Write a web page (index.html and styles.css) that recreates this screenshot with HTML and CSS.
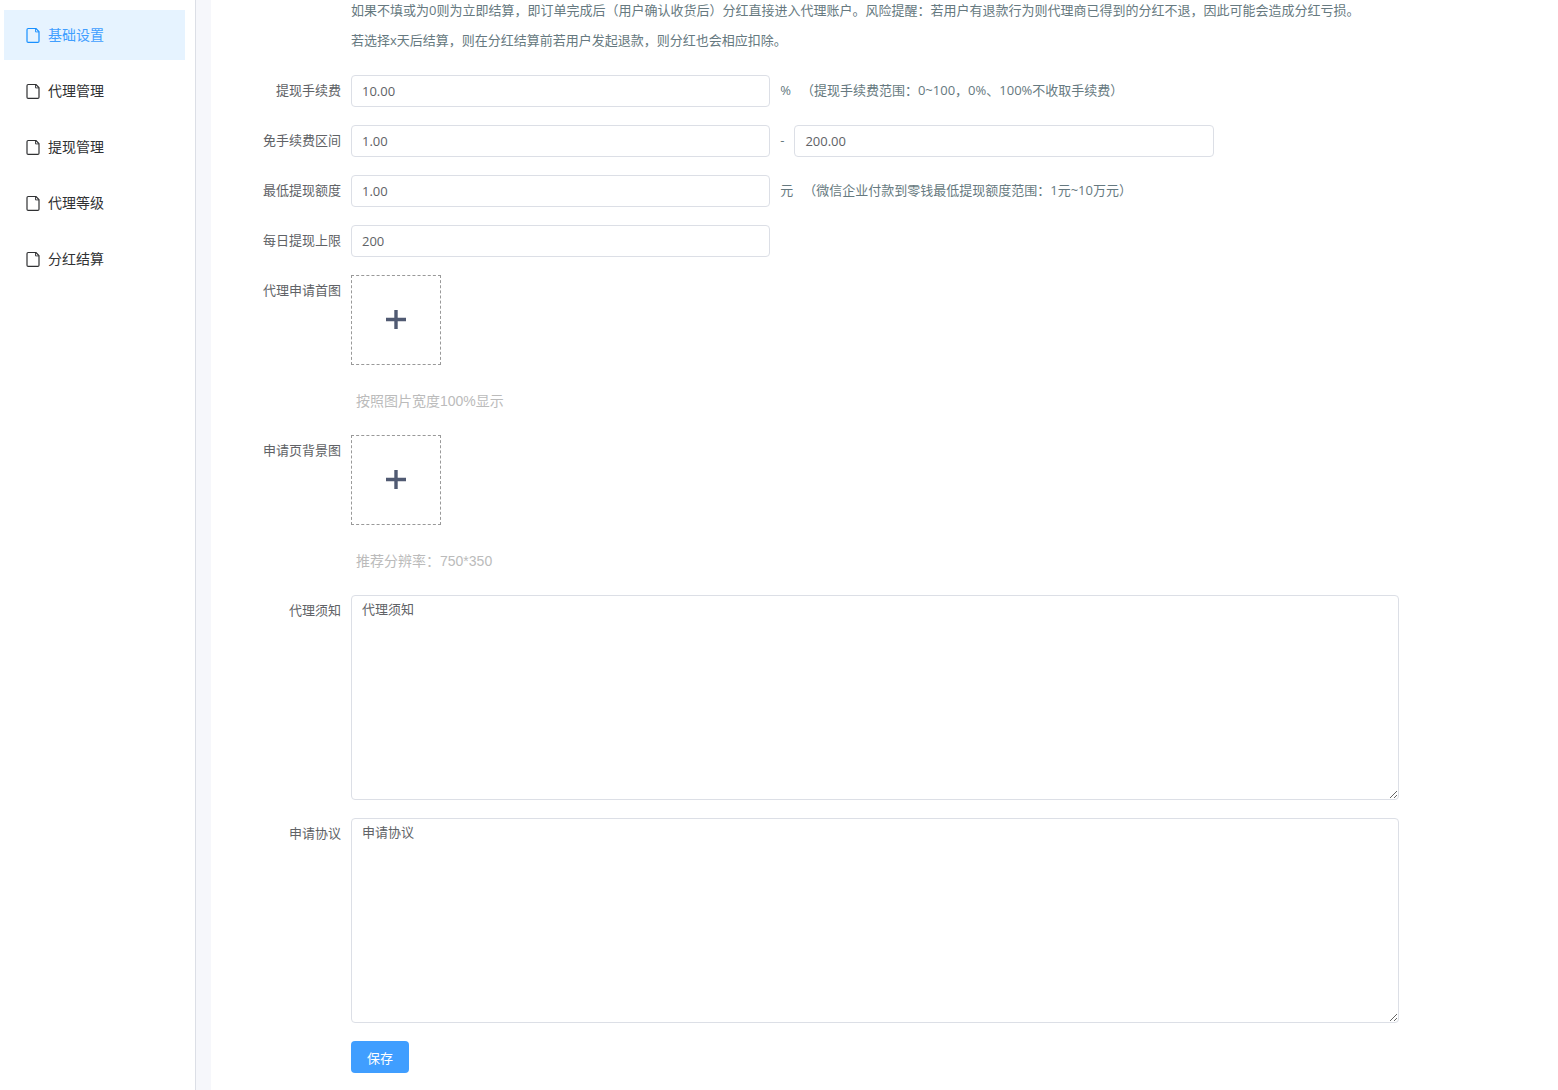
FILE: index.html
```html
<!DOCTYPE html>
<html lang="zh-CN">
<head>
  <meta charset="utf-8">
  <meta name="viewport" content="width=device-width, initial-scale=1">
  <title>基础设置</title>
  <link rel="stylesheet" href="styles.css">
</head>
<body>
  <svg class="sprite" aria-hidden="true">
    <symbol id="icon-file" viewBox="0 0 14 16">
      <path d="M2.2 1.5H9.9L13 4.6V14.2Q13 15.4 11.8 15.4H2.2Q1 15.4 1 14.2V2.7Q1 1.5 2.2 1.5Z" fill="none" stroke="currentColor" stroke-width="1.2" stroke-linejoin="round"/>
      <path d="M9.5 1.5V4.9H13" fill="none" stroke="currentColor" stroke-width="0.9"/>
    </symbol>
    <symbol id="icon-plus" viewBox="0 0 20 20">
      <path d="M0 9.5H20M10 0V19" fill="none" stroke="currentColor" stroke-width="3.4"/>
    </symbol>
  </svg>

  <div class="layout">
    <nav class="sidebar">
      <a href="#" class="menu-item active"><svg class="menu-icon"><use href="#icon-file"/></svg><span>基础设置</span></a>
      <a href="#" class="menu-item"><svg class="menu-icon"><use href="#icon-file"/></svg><span>代理管理</span></a>
      <a href="#" class="menu-item"><svg class="menu-icon"><use href="#icon-file"/></svg><span>提现管理</span></a>
      <a href="#" class="menu-item"><svg class="menu-icon"><use href="#icon-file"/></svg><span>代理等级</span></a>
      <a href="#" class="menu-item"><svg class="menu-icon"><use href="#icon-file"/></svg><span>分红结算</span></a>
    </nav>

    <main class="content">
      <form class="form">
        <div class="notes">
          <p>如果不填或为0则为立即结算，即订单完成后（用户确认收货后）分红直接进入代理账户。风险提醒：若用户有退款行为则代理商已得到的分红不退，因此可能会造成分红亏损。</p>
          <p>若选择x天后结算，则在分红结算前若用户发起退款，则分红也会相应扣除。</p>
        </div>

        <div class="form-item">
          <label class="label" for="fee">提现手续费</label>
          <div class="field">
            <input class="input" id="fee" type="text" value="10.00">
            <span class="unit">%</span>
            <span class="tip">（提现手续费范围：0~100，0%、100%不收取手续费）</span>
          </div>
        </div>

        <div class="form-item">
          <label class="label" for="free-min">免手续费区间</label>
          <div class="field">
            <input class="input" id="free-min" type="text" value="1.00">
            <span class="unit">-</span>
            <input class="input" id="free-max" type="text" value="200.00" aria-label="免手续费区间上限">
          </div>
        </div>

        <div class="form-item">
          <label class="label" for="min">最低提现额度</label>
          <div class="field">
            <input class="input" id="min" type="text" value="1.00">
            <span class="unit">元</span>
            <span class="tip">（微信企业付款到零钱最低提现额度范围：1元~10万元）</span>
          </div>
        </div>

        <div class="form-item">
          <label class="label" for="daily">每日提现上限</label>
          <div class="field">
            <input class="input" id="daily" type="text" value="200">
          </div>
        </div>

        <div class="form-item">
          <label class="label" for="banner">代理申请首图</label>
          <div class="field column">
            <button class="upload" id="banner" type="button" aria-label="上传"><svg class="plus"><use href="#icon-plus"/></svg></button>
            <p class="upload-tip">按照图片宽度100%显示</p>
          </div>
        </div>

        <div class="form-item">
          <label class="label" for="background">申请页背景图</label>
          <div class="field column">
            <button class="upload" id="background" type="button" aria-label="上传"><svg class="plus"><use href="#icon-plus"/></svg></button>
            <p class="upload-tip">推荐分辨率：750*350</p>
          </div>
        </div>

        <div class="form-item">
          <label class="label" for="notice">代理须知</label>
          <div class="field">
            <textarea class="textarea" id="notice">代理须知</textarea>
          </div>
        </div>

        <div class="form-item">
          <label class="label" for="agreement">申请协议</label>
          <div class="field">
            <textarea class="textarea" id="agreement">申请协议</textarea>
          </div>
        </div>

        <button class="save" type="submit">保存</button>
      </form>
    </main>
  </div>
</body>
</html>
```

FILE: styles.css
```css
* {
  box-sizing: border-box;
}

body {
  margin: 0;
  background: #fff;
  color: #606266;
  font-family: "Open Sans", "Noto Sans CJK SC", sans-serif;
  font-size: 13px;
}

p {
  margin: 0;
}

input, textarea, button {
  font: inherit;
  color: inherit;
}

.sprite {
  display: none;
}

.layout {
  display: flex;
  min-height: 100vh;
}

/* Sidebar */
.sidebar {
  display: flex;
  flex-direction: column;
  gap: 6px;
  flex: 0 0 196px;
  padding: 10px 10px 0 4px;
  border-right: 1px solid #dcdfe6;
  font-family: Roboto, "Noto Sans CJK SC", sans-serif;
}

.menu-item {
  display: flex;
  align-items: center;
  gap: 8px;
  height: 50px;
  padding-left: 22px;
  color: #303133;
  font-size: 14px;
  line-height: 20px;
  text-decoration: none;
}

.menu-item.active {
  background: #e6f3ff;
  color: #409eff;
}

.menu-icon {
  width: 14px;
  height: 16px;
}

.active .menu-icon {
  color: #1890ff;
}

/* Form */
.content {
  flex: 1;
  min-width: 0;
  border-left: 15px solid #f6f7fb;
}

.form {
  display: flex;
  flex-direction: column;
  gap: 18px;
  padding: 0 159px 17px 0;
}

.notes {
  display: flex;
  flex-direction: column;
  gap: 10px;
  margin: 0 0 7px 140px;
  color: #667980;
  line-height: 20px;
}

.form-item {
  display: flex;
}

.label {
  flex: 0 0 140px;
  padding-right: 10px;
  line-height: 30px;
  text-align: right;
}

.field {
  display: flex;
  flex: 1;
  min-width: 0;
}

.column {
  flex-direction: column;
  align-items: flex-start;
}

.input {
  flex: 0 0 40%;
  min-width: 0;
  height: 32px;
  padding: 0 10px;
  border: 1px solid #dcdfe6;
  border-radius: 4px;
  background: #fff;
}

.unit {
  padding: 0 10px;
  color: #667980;
  line-height: 30px;
}

.tip {
  color: #667980;
  line-height: 30px;
  white-space: nowrap;
}

.upload {
  display: flex;
  align-items: center;
  justify-content: center;
  width: 90px;
  height: 90px;
  padding: 0;
  border: 1px dashed #999;
  background: #fff;
  color: #505a72;
  cursor: pointer;
}

.plus {
  width: 20px;
  height: 20px;
}

.upload-tip {
  margin: 20px 0 0 5px;
  color: #bbb;
  font-family: "Liberation Sans", "Noto Sans CJK SC", sans-serif;
  font-size: 14px;
  line-height: 32px;
}

.textarea {
  width: 100%;
  height: 205px;
  padding: 3px 10px;
  border: 1px solid #dcdfe6;
  border-radius: 4px;
  line-height: 20px;
  resize: vertical;
}

.save {
  align-self: flex-start;
  height: 32px;
  margin-left: 140px;
  padding: 0 16px;
  border: 0;
  border-radius: 4px;
  background: #409eff;
  color: #fff;
  cursor: pointer;
}
```
